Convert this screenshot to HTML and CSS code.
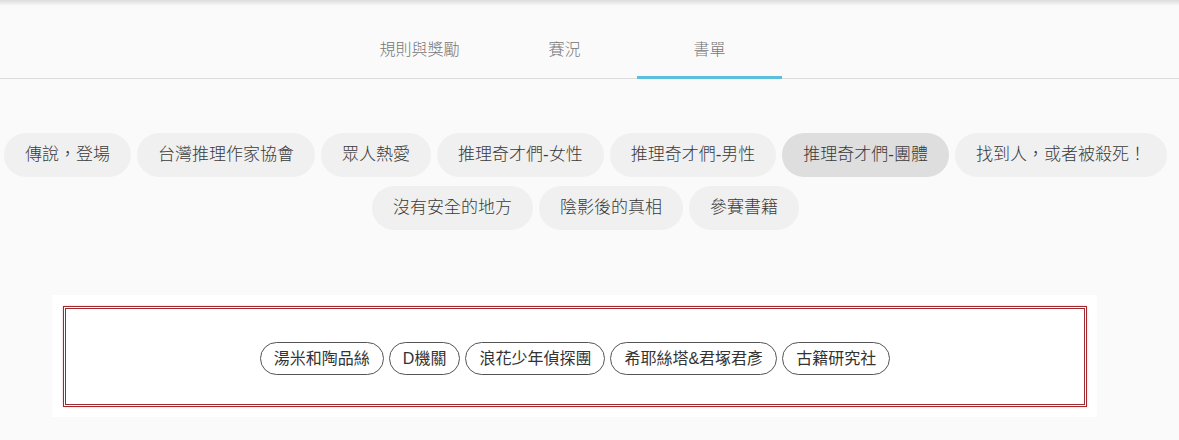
FILE: index.html
```html
<!DOCTYPE html>
<html lang="zh-Hant">
<head>
    <meta charset="UTF-8">
    <meta name="viewport" content="width=device-width, initial-scale=1.0">
    <title>書單</title>
    <link rel="stylesheet" href="styles.css">
</head>
<body>
    <div class="top-shadow"></div>

    <nav class="tabs">
        <a class="tab" href="#">規則與獎勵</a>
        <a class="tab" href="#">賽況</a>
        <a class="tab active" href="#">書單</a>
    </nav>

    <!-- categories -->
    <div class="pills">
        <span class="pill">傳說，登場</span>
        <span class="pill">台灣推理作家協會</span>
        <span class="pill">眾人熱愛</span>
        <span class="pill">推理奇才們-女性</span>
        <span class="pill">推理奇才們-男性</span>
        <span class="pill active">推理奇才們-團體</span>
        <span class="pill">找到人，或者被殺死！</span>
        <span class="pill">沒有安全的地方</span>
        <span class="pill">陰影後的真相</span>
        <span class="pill">參賽書籍</span>
    </div>

    <div class="panel">
        <div class="panel-inner">
            <span class="chip">湯米和陶品絲</span>
            <span class="chip">D機關</span>
            <span class="chip">浪花少年偵探團</span>
            <span class="chip">希耶絲塔&amp;君塚君彥</span>
            <span class="chip">古籍研究社</span>
        </div>
    </div>
</body>
</html>
```

FILE: styles.css
```css
body {
    margin: 0;
    background-color: #fafafa;
    font-family: "Liberation Sans", "Noto Sans CJK TC", sans-serif;
    color: #333;
}

.top-shadow {
    height: 6px;
    margin-bottom: -6px;
    background: linear-gradient(#dcdcdc, rgba(250, 250, 250, 0));
}

.tabs {
    display: flex;
    padding-left: 347px;
    border-bottom: 1px solid #ddd;
}

.tab {
    width: 145px;
    padding: 38px 0 14px;
    margin-bottom: -1px;
    line-height: 24px;
    font-size: 16px;
    font-weight: 300;
    text-align: center;
    color: #777;
    text-decoration: none;
    border-bottom: 3px solid transparent;
}

.tab.active {
    border-bottom-color: #5bbfdd;
}

.pills {
    display: flex;
    flex-wrap: wrap;
    justify-content: center;
    gap: 9px 6px;
    margin-top: 54px;
    padding-right: 8px;
}

.pill {
    height: 44px;
    line-height: 44px;
    padding: 0 21px;
    border-radius: 22px;
    background-color: #f0f0f0;
    font-size: 17px;
    font-weight: 300;
    color: #3a3a3a;
}

.pill.active {
    background-color: #dedede;
}

.panel {
    width: 1045px;
    margin: 65px 0 0 52px;
    padding: 11px 10px 10px 11px;
    box-sizing: border-box;
    background-color: #fff;
}

.panel-inner {
    display: flex;
    justify-content: center;
    gap: 5px;
    padding: 33px 0 29px;
    border: 3px double #9e2a2f;
    box-shadow: 0 0 2px rgba(200, 60, 70, 0.35);
}

.chip {
    height: 31px;
    line-height: 31px;
    padding: 0 13px;
    border: 1px solid #555;
    border-radius: 17px;
    background-color: #fff;
    font-size: 16px;
    color: #333;
}
```
